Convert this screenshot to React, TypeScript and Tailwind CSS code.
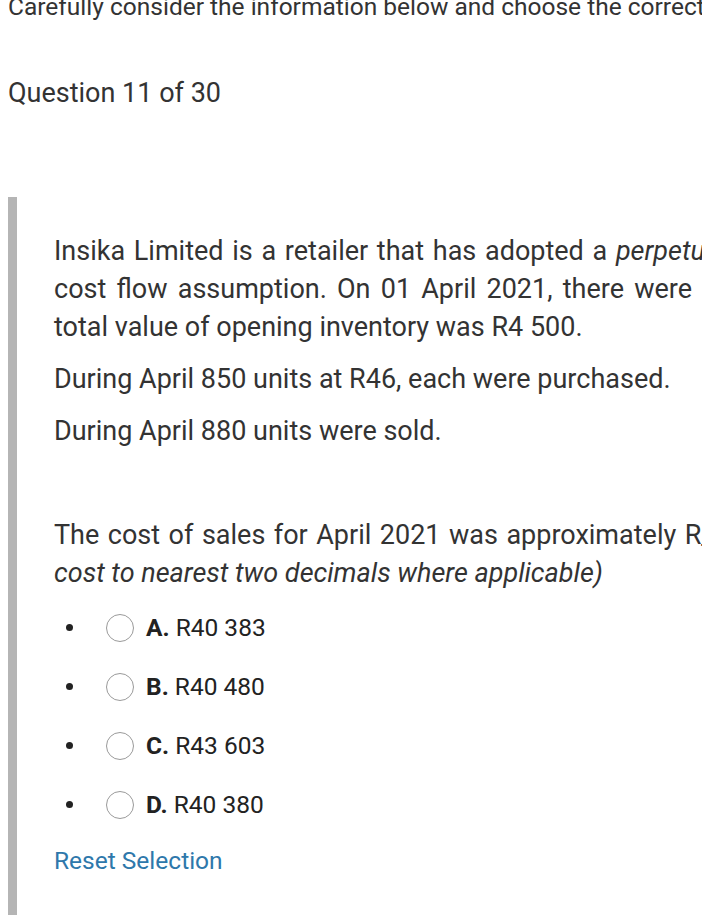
import React from 'react';

const options = [
  { letter: 'A.', value: 'R40 383' },
  { letter: 'B.', value: 'R40 480' },
  { letter: 'C.', value: 'R43 603' },
  { letter: 'D.', value: 'R40 380' },
];

function Option({ letter, value }: { letter: string; value: string }) {
  return (
    <li className="flex h-[59px] items-center">
      <span className="ml-[12px] h-[7px] w-[7px] rounded-full bg-[#222]" />
      <span className="ml-[33px] h-[28px] w-[28px] rounded-full border-[1.5px] border-[#9a9a9a] bg-white" />
      <span className="ml-[12px] text-[24.5px] leading-[30px] text-[#222]">
        <b className="font-bold">{letter}</b> {value}
      </span>
    </li>
  );
}

export default function App() {
  return (
    <div className="h-[915px] w-[702px] overflow-hidden bg-white font-['Roboto',sans-serif] text-[#333]">
      {/* instruction, cut off at the top */}
      <p className="mt-[-7px] whitespace-nowrap px-[8px] text-[24.5px] leading-[28px]">
        Carefully consider the information below and choose the correct answer.
      </p>

      <h2 className="mt-[56px] px-[8px] text-[27px] leading-[32px]">Question 11 of 30</h2>

      <div className="ml-[8px] mt-[88px] h-[800px] border-l-[9px] border-[#b5b5b5] pl-[37px] pt-[35px]">
        <div className="whitespace-nowrap text-[27px] leading-[38px]">
          <p>
            <span className="[word-spacing:2px]">
              Insika Limited is a retailer that has adopted a <i>perpetual inventory system</i> and uses the weighted average
            </span>
            <br />
            <span className="[word-spacing:3.5px]">cost flow assumption. On 01 April 2021, there were</span>
            <span className="[word-spacing:12px]"> 100 units on hand. The</span>
            <br />
            total value of opening inventory was R4 500.
          </p>
          <p className="mt-[14px]">During April 850 units at R46, each were purchased.</p>
          <p className="mt-[14px]">During April 880 units were sold.</p>
        </div>

        <p className="mt-[66px] whitespace-nowrap text-[27px] leading-[38px]">
          <span className="[word-spacing:1.8px]">
            The cost of sales for April 2021 was approximately R________. <i>(Round unit</i>
          </span>
          <br />
          <i>cost to nearest two decimals where applicable)</i>
        </p>

        <ul className="mt-[6px]">
          {options.map((o) => (
            <Option key={o.letter} {...o} />
          ))}
        </ul>

        <button className="mt-[12px] text-[24.5px] leading-[30px] text-[#2e78ab]">Reset Selection</button>
      </div>
    </div>
  );
}
